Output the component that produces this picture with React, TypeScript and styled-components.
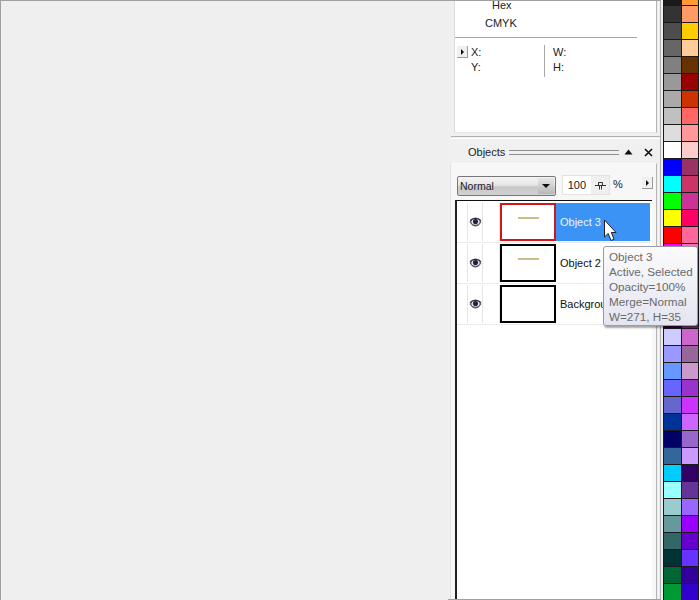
import React from "react";
import styled, { createGlobalStyle } from "styled-components";

const Global = createGlobalStyle`
  html, body { margin: 0; padding: 0; background: #f0f0f0; }
  #root { width: 700px; height: 600px; overflow: hidden; }
`;

const Window = styled.div`
  position: relative;
  width: 700px;
  height: 600px;
  display: grid;
  grid-template-columns: 448px 215px 37px;
  box-sizing: border-box;
  overflow: hidden;
  font-family: "Liberation Sans", Arial, sans-serif;
  font-size: 11px;
  color: #222;
`;
const Canvas = styled.div`
  background: #efefef;
  border-top: 1px solid #a0a0a0;
  border-left: 1px solid #a0a0a0;
  border-bottom: 1px solid #a0a0a0;
`;
const Dock = styled.div`
  display: flex;
  flex-direction: column;
  background: #f0f0f0;
  border-top: 1px solid #a0a0a0;
  border-bottom: 1px solid #a0a0a0;
  border-right: 1px solid #b0b0b0;
  margin-right: 2px;
  height: 600px;
  box-sizing: border-box;
`;
const ColorPanel = styled.div`
  height: 132px;
  flex: none;
  margin: 0 3px 0 6px;
  background: #fff;
  box-sizing: border-box;
  border-left: 1px solid #dcdcdc;
  border-right: 1px solid #b4b4b4;
  border-bottom: 1px solid #e4e4e4;
`;
const ColorLabel = styled.div<{ $indent: number; $lift?: number }>`
  height: 18px;
  line-height: 18px;
  margin-top: ${(p) => p.$lift ?? 0}px;
  padding-left: ${(p) => p.$indent}px;
`;
const Rule = styled.div`
  height: 1px;
  background: #a8a8a8;
  margin: 5px 19px 0 0;
`;
const Coords = styled.div`
  display: grid;
  grid-template-columns: 89px 1fr;
  margin-top: 7px;
`;
const CoordCol = styled.div<{ $divider?: boolean }>`
  height: 32px;
  display: flex;
  flex-direction: column;
  ${(p) => (p.$divider ? "border-left: 1px solid #a8a8a8; padding-left: 8px;" : "padding-left: 16px; position: relative;")}
`;
const CoordText = styled.div`
  height: 15px;
  line-height: 15px;
`;
const FlyoutBtn = styled.div`
  width: 10px;
  height: 11px;
  background: #f0f0f0;
  border-right: 1px solid #9a9a9a;
  border-bottom: 1px solid #9a9a9a;
  display: flex;
  align-items: center;
  justify-content: center;
  position: absolute;
  left: 2px;
  top: 1px;
  &::after {
    content: "";
    border-left: 3px solid #111;
    border-top: 3px solid transparent;
    border-bottom: 3px solid transparent;
  }
`;
const Divider = styled.div`
  height: 1px;
  margin: 3px 0 0 3px;
  flex: none;
  border-top: 1px solid #b0b0b0;
  border-bottom: 1px solid #fff;
  box-sizing: content-box;
`;
const TitleBar = styled.div`
  height: 22px;
  display: flex;
  align-items: center;
  padding: 2px 4px 0 20px;
  gap: 2px;
  flex: none;
`;
const TitleText = styled.div`
  font-size: 11px;
`;
const Grip = styled.div`
  flex: 1;
  height: 3px;
  margin: 0 -3px 0 2px;
  border-top: 1px solid #8c8c8c;
  border-bottom: 1px solid #8c8c8c;
`;
const TitleBtn = styled.div`
  width: 16px;
  height: 14px;
  display: flex;
  align-items: center;
  justify-content: center;
  margin-left: 2px;
`;
const Body = styled.div`
  flex: 1;
  display: flex;
  flex-direction: column;
  margin: 0 3px 0 2px;
  padding: 12px 0 0 4px;
  background: #f7f7f7;
  border-top: 1px solid #fbfbfb;
  border-right: 1px solid #b4b4b4;
  border-left: 1px solid #e2e2e2;
  min-height: 0;
`;
const Controls = styled.div`
  display: flex;
  align-items: center;
  height: 20px;
  margin-left: 2px;
  flex: none;
`;
const Combo = styled.div`
  width: 99px;
  height: 20px;
  box-sizing: border-box;
  border: 1px solid #777;
  border-radius: 2px;
  background: linear-gradient(#f4f4f4, #e6e6e6 45%, #c8c8c8 55%, #d0d0d0);
  display: flex;
  align-items: center;
  justify-content: space-between;
  padding-left: 2px;
  font-size: 10.5px;
`;
const ComboArrow = styled.div`
  width: 16px;
  height: 16px;
  margin-right: 1px;
  background: linear-gradient(#e6e6e6, #b8b8b8);
  display: flex;
  align-items: center;
  justify-content: center;
  &::after {
    content: "";
    border-top: 4px solid #111;
    border-left: 4px solid transparent;
    border-right: 4px solid transparent;
  }
`;
const Spin = styled.div`
  width: 48px;
  height: 20px;
  margin: -1px 0 0 6px;
  align-self: flex-start;
  box-sizing: border-box;
  background: #fff;
  border: 1px solid #e2e2e2;
  display: flex;
  align-items: center;
  justify-content: flex-end;
  gap: 5px;
`;
const SpinHandle = styled.div`
  width: 18px;
  height: 18px;
  background: #efefef;
  display: flex;
  align-items: center;
  justify-content: center;
`;
const Percent = styled.div`
  margin-left: 3px;
  width: 29px;
  align-self: flex-start;
  line-height: 17px;
`;
const MenuBtn = styled.div`
  width: 10px;
  height: 11px;
  align-self: flex-start;
  margin-top: 1px;
  background: #f0f0f0;
  border-right: 1px solid #9a9a9a;
  border-bottom: 1px solid #9a9a9a;
  display: flex;
  align-items: center;
  justify-content: center;
  &::after {
    content: "";
    border-left: 3px solid #111;
    border-top: 3px solid transparent;
    border-bottom: 3px solid transparent;
  }
`;
const List = styled.div`
  flex: 1;
  margin: 4px 4px 0 0;
  padding-top: 1px;
  background: #fff;
  border-top: 1px solid #111;
  border-left: 2px solid #222;
  min-height: 0;
`;
const Row = styled.div`
  height: 41px;
  box-sizing: border-box;
  padding-top: 1px;
  display: grid;
  grid-template-columns: 11px 15px 17px 56px 1fr;
  grid-template-rows: 38px;
  border-bottom: 1px solid #ececec;
  margin-right: 2px;
`;
const Cell = styled.div`
  border-right: 1px solid #e4e4e4;
  display: flex;
  align-items: center;
  justify-content: center;
`;
const Thumb = styled.div<{ $active?: boolean }>`
  box-sizing: border-box;
  border: 2px solid ${(p) => (p.$active ? "#d01818" : "#000")};
  background: #fff;
  display: flex;
  justify-content: center;
  padding-top: 12px;
`;
const Stroke = styled.div`
  width: 21px;
  height: 2px;
  background: #c8c088;
`;
const RowName = styled.div<{ $selected?: boolean }>`
  line-height: 38px;
  padding-left: 4px;
  font-size: 11px;
  white-space: nowrap;
  overflow: hidden;
  background: ${(p) => (p.$selected ? "#3b93f5" : "#fff")};
  color: ${(p) => (p.$selected ? "#eef6ff" : "#111")};
`;
const Palette = styled.div`
  display: grid;
  grid-template-columns: 18px 17px;
  grid-auto-rows: 17px;
  margin-top: -11px;
  width: 36px;
  height: 640px;
  box-sizing: border-box;
  border-left: 1px solid #1a1a1a;
  background: #111;
`;
const Swatch = styled.div<{ $c: string }>`
  background: ${(p) => p.$c};
  border-right: 1px solid #1a1a1a;
  border-bottom: 1px solid #1a1a1a;
`;
const Tooltip = styled.div`
  position: absolute;
  left: 603px;
  top: 246px;
  width: 95px;
  height: 80px;
  box-sizing: border-box;
  padding: 2px 0 0 5px;
  border: 1px solid #9a9aa0;
  border-radius: 3px;
  background: linear-gradient(#fbfbfd, #e4e5f0);
  box-shadow: 1px 2px 2px rgba(0, 0, 0, 0.35);
  color: #6a6a6a;
  font-size: 11.7px;
  line-height: 15px;
  white-space: nowrap;
`;
const Cursor = styled.svg`
  position: absolute;
  left: 603px;
  top: 219px;
`;

const col1 = ["#1a1a1a","#333333","#4d4d4d","#666666","#808080","#999999","#aaaaaa","#c0c0c0","#dddddd","#ffffff","#0000ff","#00ffff","#00ff00","#ffff00","#ff0000","#ff00ff","#cc00cc","#990099","#660066","#330033","#ccccff","#9999ff","#6699ff","#6666ff","#6666cc","#003399","#000066","#336699","#00ccff","#99ffff","#99cccc","#669999","#336666","#003333","#006633","#009933","#009933"];
const col2 = ["#ff9933","#ff9966","#ffcc00","#ffcc99","#663300","#990000","#cc3300","#ff6666","#ff9999","#ffcccc","#993366","#cc3366","#cc3399","#ff0066","#ff6699","#ff66cc","#ff99cc","#cc6699","#cc3399","#663366","#cc66cc","#996699","#cc99cc","#9933cc","#cc33ff","#cc66ff","#9966cc","#cc99ff","#330066","#663399","#9966ff","#9900ff","#6600cc","#6633ff","#330099","#3300cc","#3300cc"];

const Eye = () => (
  <svg width="13" height="10" viewBox="0 0 14 11">
    <path d="M0.500 5.500C3 1.500 5 0.500 7 0.500s4 1 6.500 5C11 9.500 9 10.500 7 10.500S3 9.500 0.500 5.500Z" fill="#5a5a68" />
    <ellipse cx="7" cy="5.200" rx="4.500" ry="3.200" fill="#e8e8ee" />
    <circle cx="7" cy="5" r="2.800" fill="#23233a" />
    <path d="M1 4C3.500 0.800 10.500 0.800 13 4" stroke="#23233a" strokeWidth="1.200" fill="none" />
  </svg>
);

const rows = [
  { name: "Object 3", stroke: true, active: true },
  { name: "Object 2", stroke: true, active: false },
  { name: "Background", stroke: false, active: false },
];

export default function App() {
  return (
    <Window>
      <Global />
      <Canvas />
      <Dock>
        <ColorPanel>
          <ColorLabel $indent={37} $lift={-5}>Hex</ColorLabel>
          <ColorLabel $indent={30}>CMYK</ColorLabel>
          <Rule />
          <Coords>
            <CoordCol>
              <FlyoutBtn />
              <CoordText>X:</CoordText>
              <CoordText>Y:</CoordText>
            </CoordCol>
            <CoordCol $divider>
              <CoordText>W:</CoordText>
              <CoordText>H:</CoordText>
            </CoordCol>
          </Coords>
        </ColorPanel>
        <Divider />
        <TitleBar>
          <TitleText>Objects</TitleText>
          <Grip />
          <TitleBtn>
            <svg width="9" height="6" viewBox="0 0 9 6"><path d="M4.500 0.500 8.500 5.500H0.500Z" fill="#111" /></svg>
          </TitleBtn>
          <TitleBtn>
            <svg width="9" height="9" viewBox="0 0 9 9"><path d="M1 1 8 8M8 1 1 8" stroke="#111" strokeWidth="1.600" /></svg>
          </TitleBtn>
        </TitleBar>
        <Body>
          <Controls>
            <Combo>
              Normal
              <ComboArrow />
            </Combo>
            <Spin>
              100
              <SpinHandle>
                <svg width="11" height="9" viewBox="0 0 11 9"><path d="M0 4.500H11M3.500 1.500H7.500V4.500M3.500 1.500V4.500M4.500 4.500V8.500M6.500 4.500V8.500" stroke="#333" strokeWidth="1" fill="none" /></svg>
              </SpinHandle>
            </Spin>
            <Percent>%</Percent>
            <MenuBtn />
          </Controls>
          <List>
            {rows.map((r) => (
              <Row key={r.name}>
                <Cell />
                <Cell><Eye /></Cell>
                <Cell />
                <Thumb $active={r.active}>{r.stroke && <Stroke />}</Thumb>
                <RowName $selected={r.active}>{r.name}</RowName>
              </Row>
            ))}
          </List>
        </Body>
      </Dock>
      <Palette>
        {col1.map((c, i) => (
          <React.Fragment key={i}>
            <Swatch $c={c} />
            <Swatch $c={col2[i]} />
          </React.Fragment>
        ))}
      </Palette>
      <Tooltip>
        Object 3<br />Active, Selected<br />Opacity=100%<br />Merge=Normal<br />W=271, H=35
      </Tooltip>
      <Cursor width="14" height="23" viewBox="0 0 14 23">
        <path d="M1.500 1V18L5.200 14.500 8 21.500 11 20.200 8.300 13.500H13Z" fill="#fff" stroke="#222" strokeWidth="1" />
      </Cursor>
    </Window>
  );
}
